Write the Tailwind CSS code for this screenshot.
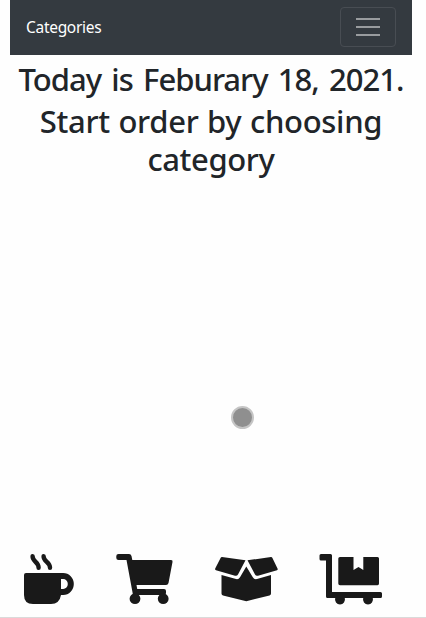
<!DOCTYPE html>
<html lang="en">
<head>
<meta charset="utf-8">
<title>Categories</title>
<script src="https://cdn.jsdelivr.net/npm/@tailwindcss/browser@4"></script>
</head>
<body class="bg-[#fefefe]">
<div class="relative flex h-[618px] w-[426px] flex-col overflow-hidden border-b border-[#dadada] font-['Noto_Sans','Open_Sans',sans-serif] text-[#212529]">
  <nav class="mr-[14px] ml-[10px] flex h-[55px] shrink-0 items-center justify-between bg-[#343a40] px-4 pb-px">
    <a class="pt-[2px] text-[15.5px] tracking-[-0.3px] text-white">Categories</a>
    <button class="flex h-10 w-14 flex-col items-center justify-center gap-[6px] rounded-[4px] border border-[#484d53]" aria-label="Menu">
      <span class="h-[2px] w-6 bg-[#999c9f]"></span>
      <span class="h-[2px] w-6 bg-[#999c9f]"></span>
      <span class="h-[2px] w-6 bg-[#999c9f]"></span>
    </button>
  </nav>
  <main class="mr-[14px] ml-[10px] flex flex-1 flex-col text-center text-[31px] leading-[38px] font-medium whitespace-nowrap">
    <h1 class="mt-[5px] h-[42px] tracking-[-1px] [word-spacing:3.2px]">Today is Feburary 18, 2021.</h1>
    <h2 class="tracking-[-0.4px]"><span class="tracking-[-0.3px] [word-spacing:0.8px]">Start order by choosing</span><br>category</h2>
  </main>
  <footer class="h-[70px] shrink-0">
    <svg class="block h-[70px] w-[426px]" viewBox="0 547 426 70" fill="#191919" stroke="none">
      <g>
        <path d="M32.6 556.200C32.300 562 38.700 561.500 38.600 567.800M43.600 556.200C43.300 562 50 561.500 50 567.800" fill="none" stroke="#191919" stroke-width="4.400" stroke-linecap="round"/>
        <path fill-rule="evenodd" d="M26 573H63.200a10.600 11 0 0 1 0 22H61Q59.500 604 51 604H33Q24 604 24 595V575Q24 573 26 573ZM61 579V589H63.200a4.600 5 0 0 0 0-10Z"/>
      </g>
      <g>
        <path d="M118.500 554H129Q131 554 131.500 556L132.300 560H171Q173 560 172.500 562L168.500 583Q168 585 166 585H136.500L137.200 589H164Q166 589 166 591V593Q166 595 164 595H133L126.500 560H118.500Q116.300 560 116.300 558V556Q116.300 554 118.500 554Z"/>
        <circle cx="135" cy="598.700" r="5.400"/><circle cx="163.200" cy="598.700" r="5.400"/>
      </g>
      <g>
        <path d="M222 557L245.500 560.300L238 574.500Q237 576.300 235 575.700L216 570.300Q214.500 569.800 215.200 568.500L220.700 557.800Q221.200 556.900 222 557Z"/>
        <path d="M271 557L247.500 560.300L255 574.500Q256 576.300 258 575.700L277 570.300Q278.200 569.800 277.500 568.500L272.300 557.800Q271.800 556.900 271 557Z"/>
        <path d="M221.500 575L236 579Q238.500 579.700 240 577.200L246.300 566.500L252.800 577.200Q254.200 579.700 257 579L271 575V593.500Q271 595 269.500 595.400L246.300 601.200L223 595.400Q221.500 595 221.500 593.500Z"/>
      </g>
      <g>
        <path d="M321 554H330.500Q332 554 332 555.500V592H380.500Q382 592 382 593.500V596.500Q382 598 380.500 598H327.500Q326 598 326 596.500V560.500H321Q319.500 560.500 319.500 559V555.500Q319.500 554 321 554Z"/>
        <path d="M335.200 598H344.800a5 5 0 1 1-9.600 0M363.200 598H372.800a5 5 0 1 1-9.600 0"/>
        <path d="M340 557H353.500V570L358.500 567L363.300 570V557H377.500Q379 557 379 558.500V583.500Q379 585.200 377.500 585.200H340Q338.300 585.200 338.300 583.500V558.500Q338.300 557 340 557Z"/>
      </g>
    </svg>
  </footer>
  <span class="absolute top-[406px] left-[231px] size-[23px] rounded-full border-2 border-[#c5c5c5] bg-[#8f8f8f]"></span>
</div>
</body>
</html>
